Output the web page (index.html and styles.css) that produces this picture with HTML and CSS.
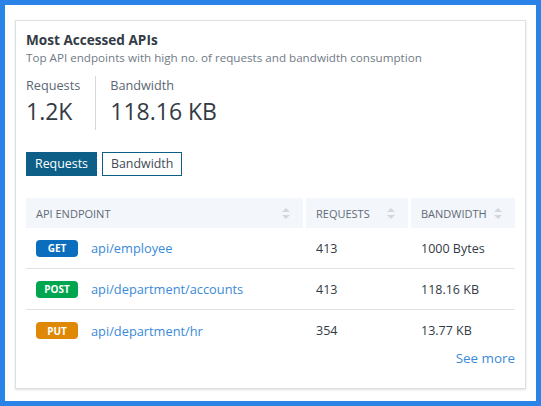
FILE: index.html
```html
<!DOCTYPE html>
<html>
<head>
<meta charset="utf-8">
<link rel="stylesheet" href="styles.css">
</head>
<body>
<div class="frame">
  <div class="card">
    <h2 class="title">Most Accessed APIs</h2>
    <p class="subtitle">Top API endpoints with high no. of requests and bandwidth consumption</p>
    <div class="stats">
      <div class="stat">
        <div class="stat-label">Requests</div>
        <div class="stat-value">1.2K</div>
      </div>
      <div class="stat stat-second">
        <div class="stat-label">Bandwidth</div>
        <div class="stat-value">118.16 KB</div>
      </div>
    </div>
    <div class="toggle">
      <button class="btn btn-active">Requests</button>
      <button class="btn">Bandwidth</button>
    </div>
    <div class="table">
      <div class="thead">
        <div class="th"><span>API ENDPOINT</span><svg class="sort" viewBox="0 0 8 11" width="8" height="11"><path d="M4 0L8 4H0Z M4 11L0 7H8Z" fill="#d3d8de"/></svg></div>
        <div class="th"><span>REQUESTS</span><svg class="sort" viewBox="0 0 8 11" width="8" height="11"><path d="M4 0L8 4H0Z M4 11L0 7H8Z" fill="#d3d8de"/></svg></div>
        <div class="th"><span>BANDWIDTH</span><svg class="sort" viewBox="0 0 8 11" width="8" height="11"><path d="M4 0L8 4H0Z M4 11L0 7H8Z" fill="#d3d8de"/></svg></div>
      </div>
      <div class="tr">
        <div class="td endpoint"><span class="badge get">GET</span><a class="link">api/employee</a></div>
        <div class="td">413</div>
        <div class="td">1000 Bytes</div>
      </div>
      <div class="tr">
        <div class="td endpoint"><span class="badge post">POST</span><a class="link">api/department/accounts</a></div>
        <div class="td">413</div>
        <div class="td">118.16 KB</div>
      </div>
      <div class="tr last">
        <div class="td endpoint"><span class="badge put">PUT</span><a class="link">api/department/hr</a></div>
        <div class="td">354</div>
        <div class="td">13.77 KB</div>
      </div>
    </div>
    <div class="more"><a class="link more-link">See more</a></div>
  </div>
</div>
</body>
</html>
```
FILE: styles.css
```css
* { box-sizing: border-box; }
html, body { margin: 0; padding: 0; }
body {
  font-family: "Open Sans", "Noto Sans", sans-serif;
  color: #333b45;
  background: #2a84e8;
}
.frame {
  width: 541px;
  height: 406px;
  border: 5px solid #2a84e8;
  background: #ffffff;
  padding: 15px 10px 12px 10px;
}
.card {
  height: 369px;
  border: 1px solid #dcdfe3;
  box-shadow: 0 1px 2px rgba(0,0,0,0.12);
  padding: 9px 10px 0 10px;
}
.title {
  margin: 0;
  font-size: 13.6px;
  font-weight: 700;
  line-height: 20px;
  color: #333b45;
}
.subtitle {
  margin: 0;
  font-size: 11.65px;
  line-height: 16px;
  color: #6f7a86;
}
.stats {
  display: flex;
  margin-top: 10px;
}
.stat {
  padding-right: 15px;
}
.stat-second {
  border-left: 1px solid #d5d9de;
  padding-left: 14px;
}
.stat-label {
  font-size: 12.7px;
  line-height: 18px;
  color: #5b6673;
}
.stat-value {
  font-size: 23px;
  line-height: 34px;
  color: #333b45;
  padding-bottom: 2px;
}
.toggle {
  display: flex;
  gap: 5px;
  margin-top: 22px;
}
.btn {
  font-family: inherit;
  font-size: 12.4px;
  height: 24px;
  padding: 0 8px;
  border: 1px solid #0d5f87;
  background: #ffffff;
  color: #3f4a56;
  border-radius: 0;
  line-height: 20px;
}
.btn-active {
  background: #0d5f87;
  color: #ffffff;
}
.table {
  margin-top: 22px;
}
.thead, .tr {
  display: grid;
  grid-template-columns: 277px 102px 104px;
  column-gap: 3px;
}
.th {
  height: 30px;
  background: #f3f6fa;
  display: flex;
  align-items: center;
  justify-content: space-between;
  padding: 0 13px 0 10px;
  font-size: 11px;
  color: #5f6b78;
}
.sort { display: block; }
.tr {
  height: 41px;
  border-bottom: 1px solid #dfe2e6;
  align-items: center;
}
.tr.last { border-bottom: none; }
.td {
  padding-left: 10px;
  font-size: 12.5px;
  color: #333b45;
}
.endpoint {
  display: flex;
  align-items: center;
  gap: 13px;
}
.badge {
  display: inline-flex;
  align-items: center;
  justify-content: center;
  width: 42px;
  height: 17px;
  border-radius: 4px;
  color: #ffffff;
  font-size: 10px;
  font-weight: 700;
}
.get { background: #0b6dbd; }
.post { background: #00a64f; }
.put { background: #df8806; }
.link {
  color: #3a8ad8;
  font-size: 12.8px;
}
.more {
  text-align: right;
  line-height: 18px;
  margin-top: -3px;
}
.more-link {
  font-size: 13.4px;
}
```
